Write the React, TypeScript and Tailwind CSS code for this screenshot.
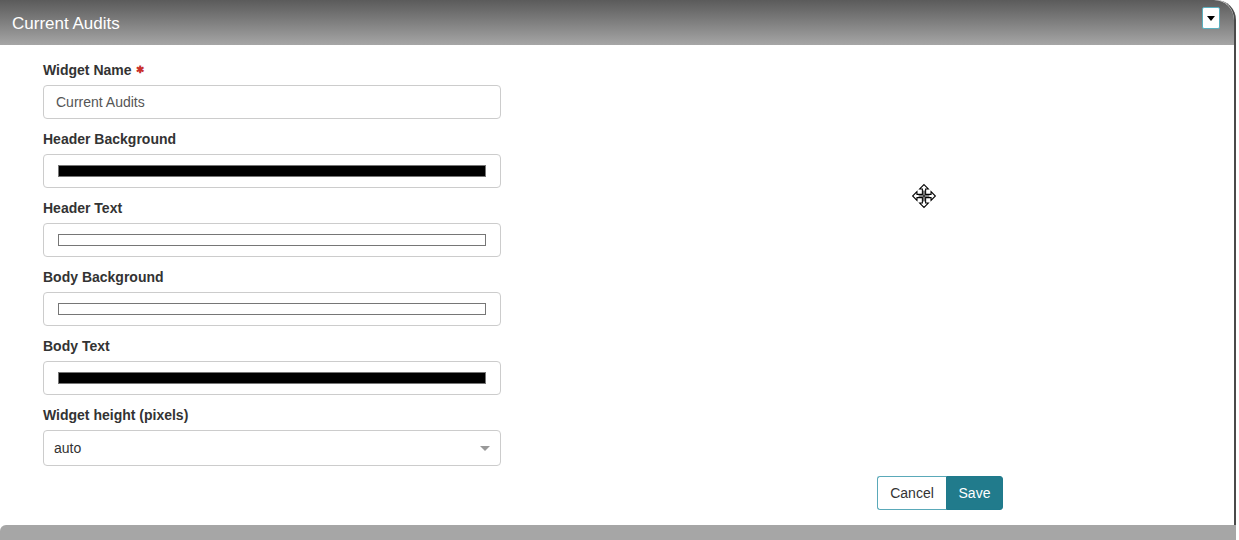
import React from "react";

type Swatch = "black" | "white";

const fields: { label: string; swatch: Swatch }[] = [
  { label: "Header Background", swatch: "black" },
  { label: "Header Text", swatch: "white" },
  { label: "Body Background", swatch: "white" },
  { label: "Body Text", swatch: "black" },
];

function ColorField({ label, swatch }: { label: string; swatch: Swatch }) {
  return (
    <div className="mb-[10px]">
      <label className="block mb-[5px] text-[14px] leading-[20px] font-bold text-[#333]">
        {label}
      </label>
      <div className="h-[34px] w-[458px] rounded-[4px] border border-[#ccc] bg-white flex items-center px-[14px]">
        <div
          className={
            swatch === "black"
              ? "h-[12px] w-full border border-[#767676] bg-black"
              : "h-[12px] w-full border border-[#767676] bg-white"
          }
        />
      </div>
    </div>
  );
}

function MoveCursor() {
  return (
    <svg
      className="absolute left-[911px] top-[183px]"
      width="26"
      height="26"
      viewBox="0 0 24 24"
    >
      <path
        d="M12 1.5 L16 5.5 L13.5 5.5 L13.5 10.5 L18.5 10.5 L18.5 8 L22.5 12 L18.5 16 L18.5 13.5 L13.5 13.5 L13.5 18.5 L16 18.5 L12 22.5 L8 18.5 L10.5 18.5 L10.5 13.5 L5.5 13.5 L5.5 16 L1.5 12 L5.5 8 L5.5 10.5 L10.5 10.5 L10.5 5.5 L8 5.5 Z"
        fill="white"
        stroke="black"
        strokeWidth="1"
        strokeLinejoin="miter"
      />
      <path d="M12 7 V17 M7 12 H17" stroke="black" strokeWidth="1" />
    </svg>
  );
}

export default function App() {
  return (
    <div className="relative w-[1239px] h-[540px] overflow-hidden bg-white font-['Liberation_Sans',Arial,sans-serif]">
      <div className="w-[1236px] border-r-2 border-[#4a4a4a] rounded-tr-[20px]">
        <div className="h-[45px] rounded-tr-[20px] bg-gradient-to-b from-[#5b5b5b] to-[#a6a6a6] flex items-center justify-between pl-[12px] pr-[14px]">
          <span className="pt-[2px] text-white text-[17px]">Current Audits</span>
          <button className="mt-[-9px] h-[22px] w-[18px] bg-white border border-[#5ab0c0] rounded-[2px] flex items-center justify-center">
            <span className="block w-0 h-0 border-l-[4px] border-r-[4px] border-t-[5px] border-l-transparent border-r-transparent border-t-black" />
          </button>
        </div>
        <div className="h-[480px] bg-white pt-[15px]">
          <div className="ml-[43px] w-[960px]">
            <div className="mb-[10px]">
              <label className="flex items-center mb-[5px] text-[14px] leading-[20px] font-bold text-[#333]">
                Widget Name
                <span className="ml-[4px] text-[#c9302c] text-[10px] leading-none">✱</span>
              </label>
              <input
                readOnly
                value="Current Audits"
                className="h-[34px] w-[458px] rounded-[4px] border border-[#ccc] px-[12px] text-[14px] text-[#555] outline-none"
              />
            </div>
            {fields.map((f) => (
              <ColorField key={f.label} label={f.label} swatch={f.swatch} />
            ))}
            <div className="mb-[10px]">
              <label className="block mb-[5px] text-[14px] leading-[20px] font-bold text-[#333]">
                Widget height (pixels)
              </label>
              <div className="h-[36px] w-[458px] rounded-[4px] border border-[#ccc] flex items-center justify-between pl-[10px] pr-[10px]">
                <span className="text-[14px] text-[#333]">auto</span>
                <span className="block w-0 h-0 border-l-[5px] border-r-[5px] border-t-[5px] border-l-transparent border-r-transparent border-t-[#999]" />
              </div>
            </div>
            <div className="flex justify-end">
              <button className="h-[34px] w-[69px] border border-[#5aa9b9] border-r-0 rounded-l-[3px] bg-white text-[14px] text-[#333]">
                Cancel
              </button>
              <button className="h-[34px] w-[57px] border border-[#1f7a8c] rounded-r-[3px] bg-[#217b8c] text-[14px] text-white">
                Save
              </button>
            </div>
          </div>
        </div>
      </div>
      <div className="w-[1236px] h-[15px] bg-[#a6a6a6] rounded-tl-[6px]" />
      <MoveCursor />
    </div>
  );
}
